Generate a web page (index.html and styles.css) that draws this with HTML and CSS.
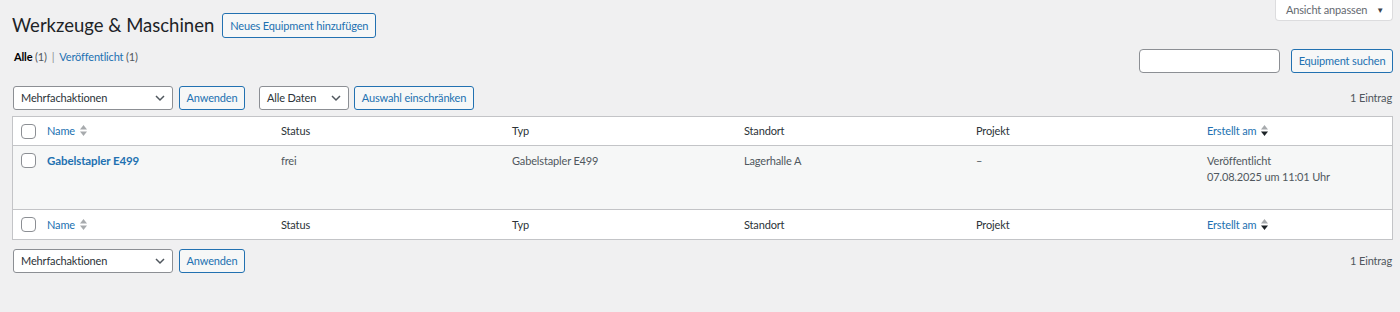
FILE: index.html
```html
<!DOCTYPE html>
<html lang="de">
<head>
<meta charset="utf-8">
<title>Werkzeuge &amp; Maschinen</title>
<link rel="stylesheet" href="styles.css">
</head>
<body>
<div class="screen-meta-links">
  <button class="screen-tab">Ansicht anpassen <span class="tab-arrow">▼</span></button>
</div>
<div class="wrap">
  <div class="title-row">
    <h1>Werkzeuge &amp; Maschinen</h1>
    <a class="page-title-action">Neues Equipment hinzufügen</a>
  </div>
  <div class="filter-row">
    <ul class="subsubsub">
      <li class="current">Alle <span class="count">(1)</span></li>
      <li class="sep">|</li>
      <li><a class="link">Veröffentlicht <span class="count">(1)</span></a></li>
    </ul>
    <div class="search-box">
      <div class="input"></div>
      <a class="button">Equipment suchen</a>
    </div>
  </div>

  <div class="tablenav">
    <div class="actions">
      <div class="select bulk"><span>Mehrfachaktionen</span><svg class="chev" width="16" height="16" viewBox="0 0 16 16"><path d="M4 6l4 4 4-4" fill="none" stroke="#50575e" stroke-width="1.5"/></svg></div>
      <a class="button">Anwenden</a>
      <div class="select dates"><span>Alle Daten</span><svg class="chev" width="16" height="16" viewBox="0 0 16 16"><path d="M4 6l4 4 4-4" fill="none" stroke="#50575e" stroke-width="1.5"/></svg></div>
      <a class="button">Auswahl einschränken</a>
    </div>
    <div class="displaying-num">1 Eintrag</div>
  </div>

  <table class="list">
    <colgroup>
      <col class="c-cb"><col class="c-name"><col class="c-std"><col class="c-std2"><col class="c-std2"><col class="c-std"><col>
    </colgroup>
    <thead>
      <tr>
        <th class="cb"><span class="checkbox"></span></th>
        <th><a class="link sort">Name <svg class="sorti" width="7" height="11" viewBox="0 0 7 11"><path d="M0 4.5L3.5 0 7 4.5z" fill="#a7aaad"/><path d="M0 6.5L3.5 11 7 6.5z" fill="#a7aaad"/></svg></a></th>
        <th>Status</th>
        <th>Typ</th>
        <th>Standort</th>
        <th>Projekt</th>
        <th><a class="link sort">Erstellt am <svg class="sorti" width="7" height="11" viewBox="0 0 7 11"><path d="M0 4.5L3.5 0 7 4.5z" fill="#a7aaad"/><path d="M0 6.5L3.5 11 7 6.5z" fill="#1d2327"/></svg></a></th>
      </tr>
    </thead>
    <tbody>
      <tr>
        <td class="cb"><span class="checkbox"></span></td>
        <td><a class="row-title">Gabelstapler E499</a></td>
        <td>frei</td>
        <td>Gabelstapler E499</td>
        <td>Lagerhalle A</td>
        <td>–</td>
        <td class="date">Veröffentlicht<br>07.08.2025 um 11:01 Uhr</td>
      </tr>
    </tbody>
    <tfoot>
      <tr>
        <th class="cb"><span class="checkbox"></span></th>
        <th><a class="link sort">Name <svg class="sorti" width="7" height="11" viewBox="0 0 7 11"><path d="M0 4.5L3.5 0 7 4.5z" fill="#a7aaad"/><path d="M0 6.5L3.5 11 7 6.5z" fill="#a7aaad"/></svg></a></th>
        <th>Status</th>
        <th>Typ</th>
        <th>Standort</th>
        <th>Projekt</th>
        <th><a class="link sort">Erstellt am <svg class="sorti" width="7" height="11" viewBox="0 0 7 11"><path d="M0 4.5L3.5 0 7 4.5z" fill="#a7aaad"/><path d="M0 6.5L3.5 11 7 6.5z" fill="#1d2327"/></svg></a></th>
      </tr>
    </tfoot>
  </table>

  <div class="tablenav bottom">
    <div class="actions">
      <div class="select bulk"><span>Mehrfachaktionen</span><svg class="chev" width="16" height="16" viewBox="0 0 16 16"><path d="M4 6l4 4 4-4" fill="none" stroke="#50575e" stroke-width="1.5"/></svg></div>
      <a class="button">Anwenden</a>
    </div>
    <div class="displaying-num">1 Eintrag</div>
  </div>
</div>
</body>
</html>
```

FILE: styles.css
```css
html, body {
  margin: 0;
  padding: 0;
}
body {
  background: #f0f0f1;
  color: #3c434a;
  font-family: Lato, "Open Sans", sans-serif;
  font-size: 11px;
  letter-spacing: -0.15px;
  line-height: 1.4;
}

.screen-meta-links {
  float: right;
  margin-right: 7px;
}
.screen-tab {
  display: flex;
  align-items: center;
  justify-content: center;
  gap: 9px;
  box-sizing: border-box;
  height: 21px;
  width: 118px;
  padding: 0 0 1px 2px;
  background: #fff;
  border: 1px solid #dcdcde;
  border-top: 0;
  border-radius: 0 0 4px 4px;
  color: #646970;
  font-family: inherit;
  font-size: 11px;
  letter-spacing: -0.15px;
  white-space: nowrap;
}
.tab-arrow {
  font-size: 8px;
  color: #3c434a;
}

.wrap {
  padding: 13px 7px 0 12px;
}

.title-row {
  display: flex;
  align-items: center;
  gap: 8px;
  height: 25px;
}
h1 {
  margin: 0;
  font-size: 18.5px;
  font-weight: 400;
  line-height: 25px;
  letter-spacing: 0;
  color: #1d2327;
}
.page-title-action,
.button {
  display: inline-flex;
  align-items: center;
  justify-content: center;
  box-sizing: border-box;
  height: 25px;
  padding: 0 9px;
  border: 1px solid #2271b1;
  border-radius: 3px;
  background: #f6f7f7;
  color: #2271b1;
  font-size: 11px;
  white-space: nowrap;
}
.page-title-action {
  width: 154px;
}

.filter-row {
  display: flex;
  justify-content: space-between;
  align-items: flex-start;
  margin-top: 9px;
  height: 26px;
}
.subsubsub {
  display: flex;
  gap: 5px;
  margin: 0;
  padding: 0 0 0 2px;
  list-style: none;
  line-height: 20px;
  color: #646970;
}
.subsubsub .current {
  color: #000;
  font-weight: 700;
}
.subsubsub .count {
  color: #50575e;
  font-weight: 400;
}
.subsubsub .sep {
  color: #8c8f94;
}
.link {
  color: #2271b1;
  text-decoration: none;
}

.search-box {
  display: flex;
  gap: 11px;
  margin-top: 2px;
}
.search-box .input {
  box-sizing: border-box;
  width: 141px;
  height: 24px;
  background: #fff;
  border: 1px solid #8c8f94;
  border-radius: 4px;
}
.search-box .button {
  width: 102px;
  height: 24px;
}

.tablenav {
  display: flex;
  justify-content: space-between;
  align-items: center;
  height: 24px;
  margin-top: 13px;
}
.tablenav.bottom {
  margin-top: 9px;
}
.actions {
  display: flex;
  align-items: center;
  padding-left: 1px;
}
.actions .button {
  height: 24px;
}
.select {
  display: flex;
  align-items: center;
  justify-content: space-between;
  box-sizing: border-box;
  height: 24px;
  padding: 0 4px 0 7px;
  background: #fff;
  border: 1px solid #8c8f94;
  border-radius: 3px;
  color: #2c3338;
  font-size: 11px;
  white-space: nowrap;
}
.select.bulk {
  width: 160px;
  margin-right: 6px;
}
.bulk + .button {
  width: 66px;
  margin-right: 14px;
}
.select.dates {
  width: 90px;
  margin-right: 5px;
}
.dates + .button {
  width: 120px;
}
.chev {
  display: block;
  flex: none;
}
.displaying-num {
  color: #50575e;
  padding-right: 1px;
}

.list {
  width: 100%;
  margin-top: 6px;
  border: 1px solid #c3c4c7;
  border-spacing: 0;
  table-layout: fixed;
  background: #fff;
}
.c-cb { width: 24px; }
.c-name { width: 234px; }
.c-std { width: 231px; }
.c-std2 { width: 232px; }

.list th {
  text-align: left;
  font-weight: 400;
  color: #2c3338;
  padding: 0 10px;
  vertical-align: middle;
  white-space: nowrap;
}
.list thead th {
  height: 28px;
  border-bottom: 1px solid #c3c4c7;
}
.list tfoot th {
  height: 29px;
  border-top: 1px solid #c3c4c7;
}
.list th.cb,
.list td.cb {
  padding: 0 0 0 8px;
}
.checkbox {
  display: block;
  box-sizing: border-box;
  width: 15px;
  height: 15px;
  background: #fff;
  border: 1px solid #8c8f94;
  border-radius: 4px;
}
.sort {
  display: inline-flex;
  align-items: center;
  gap: 5px;
}
.sorti {
  display: block;
}

.list tbody tr {
  background: #f6f7f7;
}
.list td {
  height: 63px;
  box-sizing: border-box;
  padding: 5px 10px 0;
  vertical-align: top;
  color: #50575e;
  line-height: 20px;
}
.list td.cb {
  padding-top: 7px;
}
.row-title {
  color: #2271b1;
  font-size: 11.5px;
  font-weight: 700;
  letter-spacing: -0.1px;
}
.list td.date {
  padding-top: 7px;
  line-height: 16px;
}
```
